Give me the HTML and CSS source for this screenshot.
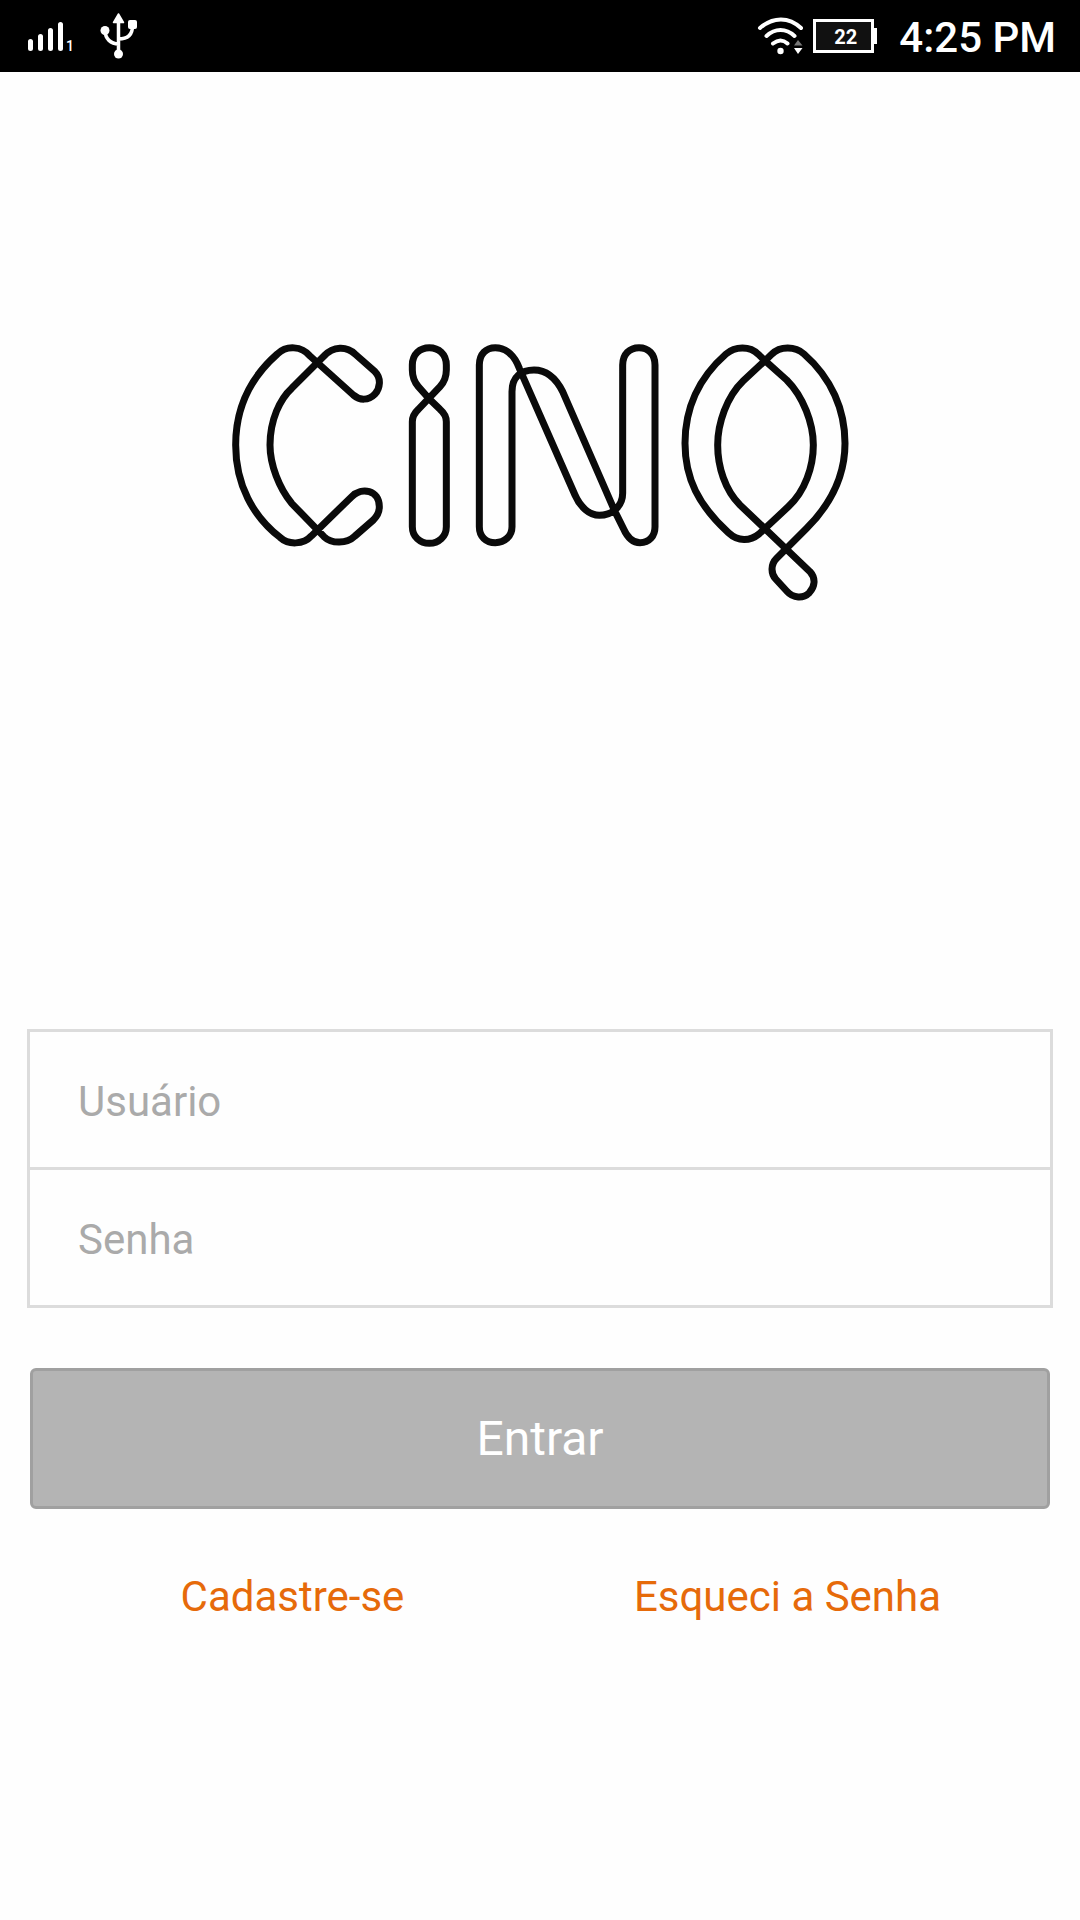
FILE: index.html
```html
<!DOCTYPE html>
<html lang="pt-BR">
<head>
<meta charset="utf-8">
<meta name="viewport" content="width=device-width, initial-scale=1.0">
<title>CINQ - Login</title>
<link rel="stylesheet" href="styles.css">
</head>
<body>

<header class="status-bar">
    <div class="status-left">
        <div class="signal">
            <svg width="38" height="32" viewBox="0 0 38 32" stroke="#fff" stroke-width="5" stroke-linecap="round">
                <path d="M2.500 21.500V28.500M12.500 16.500V28.500M22.500 10.500V28.500M32.500 4.500V28.500"/>
            </svg>
            <span class="sim">1</span>
        </div>
        <svg class="usb" width="38" height="48" viewBox="0 0 38 48" fill="none" stroke="#fff" stroke-width="3.500">
            <path d="M18.500 8V42M5 18C5 27 11 32 18.500 32M32.500 14C32.500 23 27 27 18.500 27"/>
            <g fill="#fff" stroke="none">
                <path d="M18.500 2L23.500 10.500H13.500Z" stroke="#fff" stroke-width="1.500" stroke-linejoin="round"/>
                <circle cx="5" cy="18.500" r="4.500"/>
                <rect x="28" y="8" width="9" height="9" rx="2"/>
                <circle cx="18.500" cy="42" r="4.500"/>
            </g>
        </svg>
    </div>
    <div class="status-right">
        <svg width="48" height="38" viewBox="0 0 48 38" fill="none" stroke="#fff" stroke-width="4" stroke-linecap="round">
            <path d="M3 11C16 -0.500 32 -0.500 44 11M9.500 19C18 11 29 11 37.500 19M16 26.500C21 22.500 26 22.500 30.500 26.500"/>
            <circle cx="23.500" cy="34" r="3.200" fill="#fff" stroke="none"/>
            <path d="M37 28.500H45.500L41 23Z" fill="#777" stroke="none"/>
            <path d="M37 31H45.500L41 37Z" fill="#fff" stroke="none"/>
        </svg>
        <div class="battery">22</div>
        <span class="clock">4:25 PM</span>
    </div>
</header>

<main class="login">
    <!-- each letter is one continuous line crossing over itself -->
    <svg class="logo" viewBox="0 0 1890 810" role="img" aria-label="CINQ" fill="none" stroke="#0a0a0a" stroke-width="21" stroke-linejoin="round">
        <g transform="translate(-15 -15)">
            <path d="M400 195L270 78C245 48 200 45 172 72C100 135 47 225 47 345C47 465 100 560 180 622C205 645 250 645 275 617L395 500C425 470 478 480 478 530C478 548 470 560 460 570L405 618C380 642 335 642 312 620L215 520C178 475 150 405 150 345C150 270 180 207 215 175L312 78C340 48 380 48 405 72L465 125C485 145 480 175 465 192C445 212 420 212 400 195Z"/>
            <path d="M628 207L595 170C582 155 577 140 577 120V105C577 72 600 53 628 53C656 53 679 72 679 105V120C679 140 674 155 660 170L595 238C582 250 577 262 577 275V590C577 620 600 640 628 640S679 620 679 590V275C679 262 674 250 660 238Z"/>
        </g>
        <g transform="translate(705 -15)">
            <path d="M58 105V590C58 620 78 638 106 638S156 618 156 590V185C156 140 185 120 222 120C258 120 288 145 308 185L465 545L490 595C500 618 515 638 540 638C568 638 585 618 585 590V105C585 72 565 53 537 53S488 72 488 105V490C488 530 455 556 418 556C388 556 360 530 345 495L178 115C165 80 140 53 106 53C78 53 58 72 58 105Z"/>
        </g>
        <g transform="translate(1305 -15)">
            <path d="M315 92L295 73C270 47 225 48 198 72C115 145 75 235 75 340C75 445 115 525 205 608C235 636 270 634 297 612L385 530C435 485 460 410 460 345C460 280 430 200 380 150Z"/>
            <path d="M315 92L335 73C360 48 405 48 432 72C515 145 555 240 555 340C555 450 505 530 440 595L350 685C332 703 332 730 347 747L380 783C400 806 430 806 448 788C465 770 468 745 450 725L240 525C195 480 173 410 173 345C173 280 200 200 250 152Z"/>
        </g>
    </svg>

    <form class="login-form">
        <div class="fields">
            <input type="text" id="usuario" placeholder="Usuário" aria-label="Usuário">
            <input type="password" id="senha" placeholder="Senha" aria-label="Senha">
        </div>
        <button type="submit">Entrar</button>
    </form>

    <nav class="links">
        <a href="#cadastro">Cadastre-se</a>
        <a href="#senha">Esqueci a Senha</a>
    </nav>
</main>

</body>
</html>
```
FILE: styles.css
```css
* {
    box-sizing: border-box;
}
body {
    margin: 0;
    background-color: #fefefe;
    font-family: Roboto, sans-serif;
}

/* status bar */
.status-bar {
    display: flex;
    justify-content: space-between;
    align-items: center;
    height: 72px;
    padding: 0 24px 0 26px;
    background-color: #000;
    color: #fff;
}
.status-left,
.status-right {
    display: flex;
    align-items: center;
}
.status-left {
    gap: 26px;
}
.signal {
    display: flex;
    align-items: flex-end;
    padding-left: 2px;
}
.sim {
    font-size: 14px;
    line-height: 12px;
    font-weight: 500;
}
.battery {
    position: relative;
    width: 61px;
    height: 34px;
    margin: 0 25px 0 8px;
    padding-left: 4px;
    border: 3px solid #fff;
    background-color: #111;
    font-size: 20px;
    line-height: 30px;
    font-weight: 700;
    text-align: center;
}
.battery::after {
    content: "";
    position: absolute;
    top: 6px;
    right: -6px;
    width: 4px;
    height: 16px;
    background-color: #fff;
}
.clock {
    padding-top: 3px;
    font-size: 42px;
    line-height: 48px;
    font-weight: 500;
}

/* login */
.login {
    padding: 0 27px;
}
.logo {
    display: block;
    width: 630px;
    max-width: 100%;
    margin: 263px auto 424px;
}
.fields {
    border: 3px solid #dcdcdc;
}
.fields input {
    display: block;
    width: 100%;
    height: 135px;
    padding: 4px 48px 0;
    border: 0;
    background: none;
    color: #333;
    font-family: inherit;
    font-size: 42px;
}
.fields input + input {
    height: 138px;
    border-top: 3px solid #dcdcdc;
}
.fields input::placeholder {
    color: #aaa;
}
button {
    display: block;
    width: calc(100% - 6px);
    height: 141px;
    margin: 60px auto 0;
    border: 3px solid #a0a0a0;
    border-radius: 6px;
    background-color: #b4b4b4;
    color: #fff;
    font-family: inherit;
    font-size: 48px;
    cursor: pointer;
}
.links {
    display: flex;
    margin: 64px 18px 0;
}
.links a {
    flex: 1;
    color: #e66a0a;
    font-size: 42px;
    line-height: 48px;
    text-align: center;
    text-decoration: none;
}
```
